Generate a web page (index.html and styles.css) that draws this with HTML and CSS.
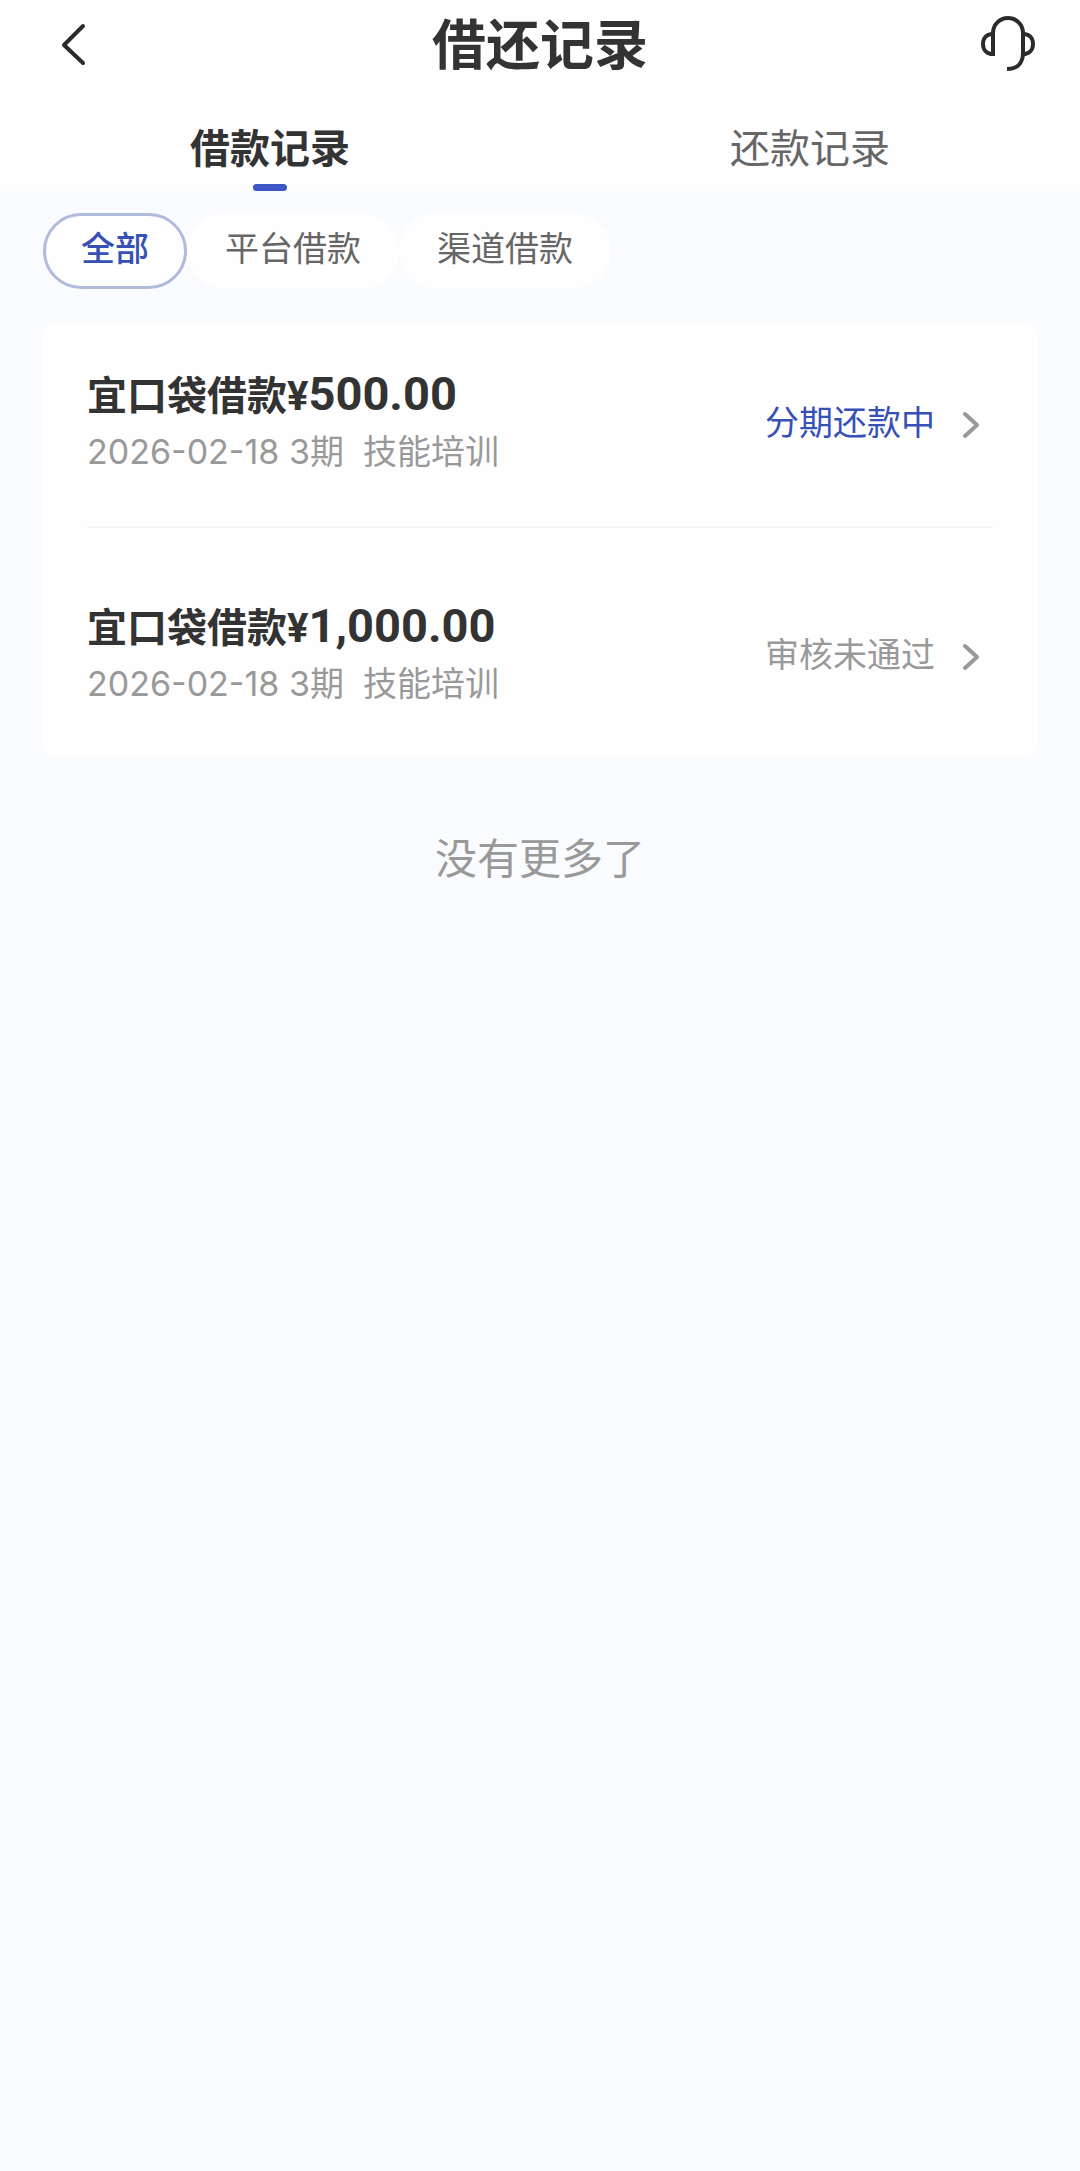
FILE: index.html
```html
<!DOCTYPE html>
<html lang="zh-CN">
<head>
    <meta charset="UTF-8">
    <meta name="viewport" content="width=device-width, initial-scale=1.0">
    <title>借还记录</title>
    <link rel="stylesheet" href="styles.css">
</head>
<body>
    <header class="header">
        <button class="icon-btn" type="button" aria-label="返回">
            <svg width="60" height="60" viewBox="0 0 60 60" fill="none" stroke="#2b2b2b" stroke-width="4" stroke-linecap="round" stroke-linejoin="round">
                <path d="M40 12 L21 31 L40 49"/>
            </svg>
        </button>
        <h1 class="title">借还记录</h1>
        <button class="icon-btn" type="button" aria-label="客服">
            <svg width="60" height="60" viewBox="0 0 60 60" fill="none" stroke="#2b2b2b" stroke-width="4" stroke-linejoin="round">
                <path d="M16 42 V19 A15 15 0 0 1 46 19 V39 C46 49 40 55 30 55"/>
                <path d="M16 20 C10 20 6 24 6 30 C6 36 10 40 16 40"/>
                <path d="M46 20 C52 20 56 24 56 30 C56 36 52 40 46 40"/>
            </svg>
        </button>
    </header>

    <nav class="tabs">
        <button class="tab active" type="button">借款记录</button>
        <button class="tab" type="button">还款记录</button>
    </nav>

    <main class="content">
        <div class="filters">
            <button class="chip active" type="button">全部</button>
            <button class="chip" type="button">平台借款</button>
            <button class="chip" type="button">渠道借款</button>
        </div>

        <div class="card">
            <a class="record" href="#">
                <div class="info">
                    <div class="name">宜口袋借款¥<span class="amount">500.00</span></div>
                    <div class="detail">2026-02-18 3期&nbsp; 技能培训</div>
                </div>
                <span class="status repaying">分期还款中</span>
                <svg class="arrow" width="20" height="30" viewBox="0 0 20 30" fill="none" stroke="#999" stroke-width="4" stroke-linecap="round" stroke-linejoin="round">
                    <path d="M4 4 L16 15 L4 26"/>
                </svg>
            </a>
            <a class="record" href="#">
                <div class="info">
                    <div class="name">宜口袋借款¥<span class="amount">1,000.00</span></div>
                    <div class="detail">2026-02-18 3期&nbsp; 技能培训</div>
                </div>
                <span class="status">审核未通过</span>
                <svg class="arrow" width="20" height="30" viewBox="0 0 20 30" fill="none" stroke="#999" stroke-width="4" stroke-linecap="round" stroke-linejoin="round">
                    <path d="M4 4 L16 15 L4 26"/>
                </svg>
            </a>
        </div>

        <p class="no-more">没有更多了</p>
    </main>
</body>
</html>
```
FILE: styles.css
```css
* {
    box-sizing: border-box;
}
body {
    margin: 0;
    background: #f9fbff;
    color: #333;
    font-family: "Noto Sans CJK SC", sans-serif;
}
button {
    padding: 0;
    border: none;
    background: none;
    font-family: inherit;
    cursor: pointer;
}
.header {
    display: flex;
    align-items: center;
    justify-content: space-between;
    height: 88px;
    padding: 0 43px;
    background: #fefefe;
}
.icon-btn {
    width: 60px;
    height: 60px;
}
.icon-btn svg {
    display: block;
}
.title {
    margin: 0;
    padding-bottom: 4px;
    font-size: 54px;
    line-height: 80px;
    font-weight: 700;
}
.tabs {
    display: flex;
    height: 103px;
    background: #fefefe;
}
.tab {
    display: flex;
    flex: 1;
    flex-direction: column;
    align-items: center;
    justify-content: space-between;
    padding-top: 28px;
    font-size: 40px;
    line-height: 60px;
    color: #666;
}
.tab.active {
    font-weight: 700;
    color: #333;
}
.tab.active::after {
    content: "";
    width: 34px;
    height: 7px;
    border-radius: 4px;
    background: #3d56c5;
}
.content {
    padding: 22px 43px;
}
.filters {
    display: flex;
    margin-bottom: 34px;
}
.chip {
    height: 76px;
    padding: 0 35px 8px;
    border: 3px solid #fefefe;
    border-radius: 38px;
    background: #fefefe;
    font-size: 34px;
    line-height: 60px;
    color: #666;
}
.chip.active {
    border-color: #b0bbdc;
    font-weight: 500;
    color: #3650b5;
}
.card {
    padding: 0 44px;
    border-radius: 12px;
    background: #fefefe;
}
.record {
    display: flex;
    align-items: center;
    height: 203px;
    color: #999;
    text-decoration: none;
}
.record + .record {
    height: 231px;
    padding-top: 28px;
    border-top: 2px solid #f4f5f7;
}
.info {
    flex: 1;
    padding-bottom: 8px;
}
.name {
    font-family: Roboto, "Noto Sans CJK SC", sans-serif;
    font-size: 40px;
    line-height: 60px;
    font-weight: 700;
    color: #333;
}
.amount {
    font-size: 47px;
}
.detail {
    font-family: Inter, "Noto Sans CJK SC", sans-serif;
    font-size: 34px;
    line-height: 50px;
}
.status {
    padding-bottom: 8px;
    font-size: 34px;
    line-height: 50px;
}
.status.repaying {
    color: #3650b5;
}
.arrow {
    margin: 0 12px 0 26px;
}
.no-more {
    margin: 67px 0 0;
    font-size: 42px;
    line-height: 64px;
    text-align: center;
    color: #999;
}
```
